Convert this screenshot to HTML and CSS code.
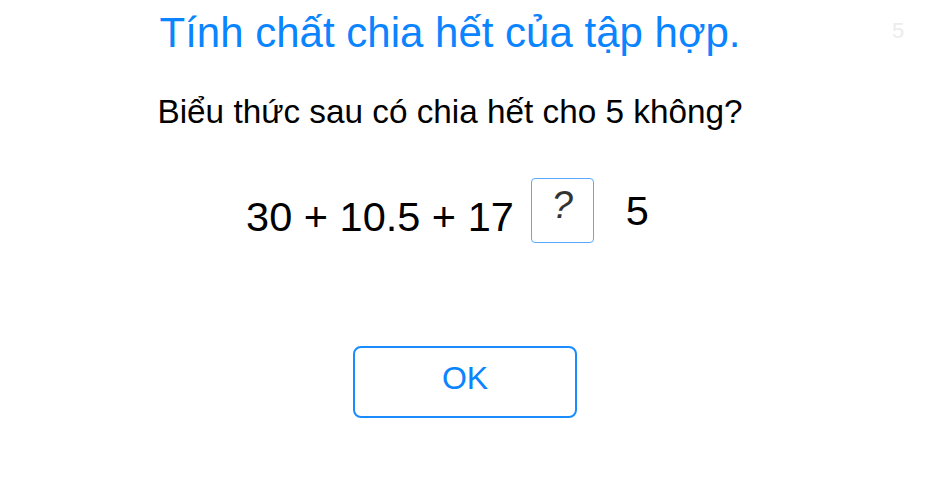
FILE: index.html
```html
<!DOCTYPE html>
<html lang="vi">
<head>
<meta charset="utf-8">
<link rel="stylesheet" href="styles.css">
</head>
<body>
<div class="page">
  <div class="page-num">5</div>
  <div class="content">
    <h1 class="title">Tính chất chia hết của tập hợp.</h1>
    <p class="question">Biểu thức sau có chia hết cho 5 không?</p>
    <div class="expr">
      <span class="lhs">30 + 10.5 + 17</span>
      <span class="slot">?</span>
      <span class="rhs">5</span>
    </div>
    <div class="actions">
      <button class="ok">OK</button>
    </div>
  </div>
</div>
</body>
</html>
```
FILE: styles.css
```css
html, body {
  margin: 0;
  padding: 0;
  background: #ffffff;
}
body {
  font-family: "Liberation Sans", Arial, sans-serif;
  width: 940px;
  height: 490px;
  overflow: hidden;
}
.page {
  position: relative;
  width: 940px;
  height: 490px;
}
.page-num {
  position: absolute;
  top: 18px;
  left: 892px;
  font-size: 22px;
  color: #ececec;
}
.content {
  width: 900px;
  display: flex;
  flex-direction: column;
  align-items: center;
}
.title {
  margin: 9px 0 0 0;
  font-size: 42px;
  font-weight: normal;
  color: #0a84ff;
  line-height: 48px;
}
.question {
  margin: 36px 0 0 0;
  font-size: 33.3px;
  line-height: 38px;
  color: #000;
}
.expr {
  margin-top: 47px;
  margin-right: 5px;
  display: flex;
  align-items: center;
  font-size: 41.5px;
  color: #000;
}
.lhs {
  line-height: 48px;
  margin-top: 12px;
}
.slot {
  margin-left: 17px;
  width: 61px;
  height: 63px;
  border: 1px solid #5aa8ff;
  border-radius: 4px;
  display: flex;
  justify-content: center;
  font-style: italic;
  color: #333;
  font-size: 38px;
  line-height: 52px;
}
.rhs {
  margin-left: 32px;
  line-height: 48px;
}
.actions {
  margin-top: 103px;
  margin-left: 30px;
}
.ok {
  width: 224px;
  height: 72px;
  border: 2px solid #1a8cff;
  border-radius: 8px;
  background: #fff;
  color: #0a84ff;
  font-family: "Liberation Sans", Arial, sans-serif;
  font-size: 32px;
  padding: 0 0 8px 0;
}
```
